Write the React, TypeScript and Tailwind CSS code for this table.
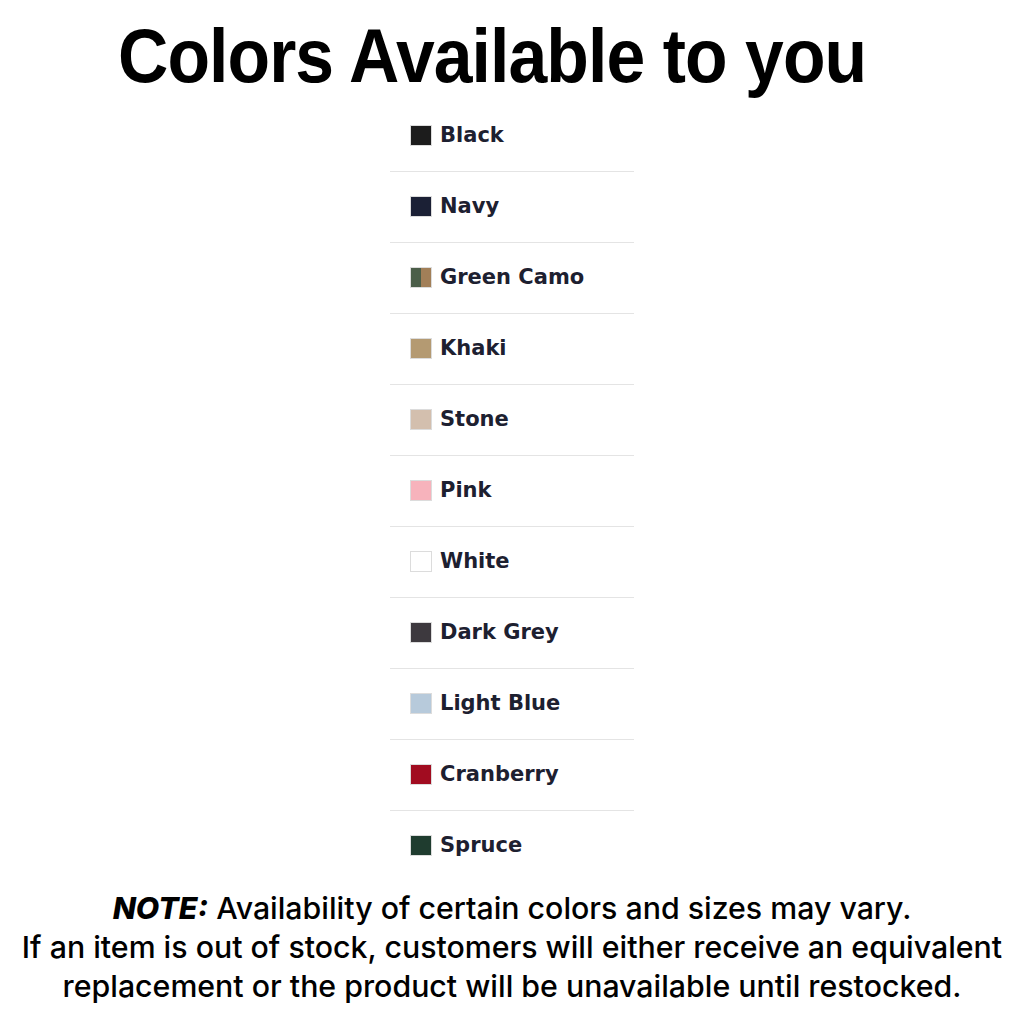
import React from "react";

type Swatch = { name: string; color?: string; split?: [string, string] };

const colors: Swatch[] = [
  { name: "Black", color: "#1c1c1c" },
  { name: "Navy", color: "#1b2035" },
  { name: "Green Camo", split: ["#4b5e49", "#a27f58"] },
  { name: "Khaki", color: "#b49a72" },
  { name: "Stone", color: "#d3bfae" },
  { name: "Pink", color: "#f7b3bc" },
  { name: "White", color: "#ffffff" },
  { name: "Dark Grey", color: "#3d393e" },
  { name: "Light Blue", color: "#b7cadb" },
  { name: "Cranberry", color: "#a10c20" },
  { name: "Spruce", color: "#1f3c2f" },
];

function SwatchBox({ s }: { s: Swatch }) {
  if (s.split) {
    return (
      <span className="flex w-[22px] h-[21px] border border-[#dcdcdc]">
        <span className="flex-1" style={{ backgroundColor: s.split[0] }} />
        <span className="flex-1" style={{ backgroundColor: s.split[1] }} />
      </span>
    );
  }
  return (
    <span
      className="block w-[22px] h-[21px] border border-[#dcdcdc]"
      style={{ backgroundColor: s.color }}
    />
  );
}

export default function App() {
  return (
    <div className="w-[1024px] h-[1024px] bg-white overflow-hidden">
      <div className="h-[100px] pt-[18px] pl-[118px]">
        <h1 className="inline-block origin-left scale-x-[0.917] font-['Liberation_Sans',Arial,sans-serif] font-bold text-[76px] leading-none tracking-[-1px] text-black whitespace-nowrap">
          Colors Available to you
        </h1>
      </div>
      <div className="ml-[390px] w-[244px]">
        {colors.map((c, i) => (
          <div
            key={c.name}
            className={
              "h-[71px] flex items-center pb-[2px] pl-[20px] gap-[8px] border-t " +
              (i === 0 ? "border-transparent" : "border-[#e4e4e4]")
            }
          >
            <SwatchBox s={c} />
            <span className="font-['DejaVu_Sans',Verdana,sans-serif] font-bold text-[21px] text-[#1d2030] leading-none">
              {c.name}
            </span>
          </div>
        ))}
      </div>
      <div className="mt-[8px] flex flex-col items-center font-['Inter',Arial,sans-serif] font-medium text-[30.3px] leading-[39px] text-black">
        <p className="whitespace-nowrap">
          <span className="font-extrabold italic">NOTE:</span> Availability of certain colors and sizes may vary.
        </p>
        <p className="whitespace-nowrap">
          If an item is out of stock, customers will either receive an equivalent
        </p>
        <p className="whitespace-nowrap">
          replacement or the product will be unavailable until restocked.
        </p>
      </div>
    </div>
  );
}
